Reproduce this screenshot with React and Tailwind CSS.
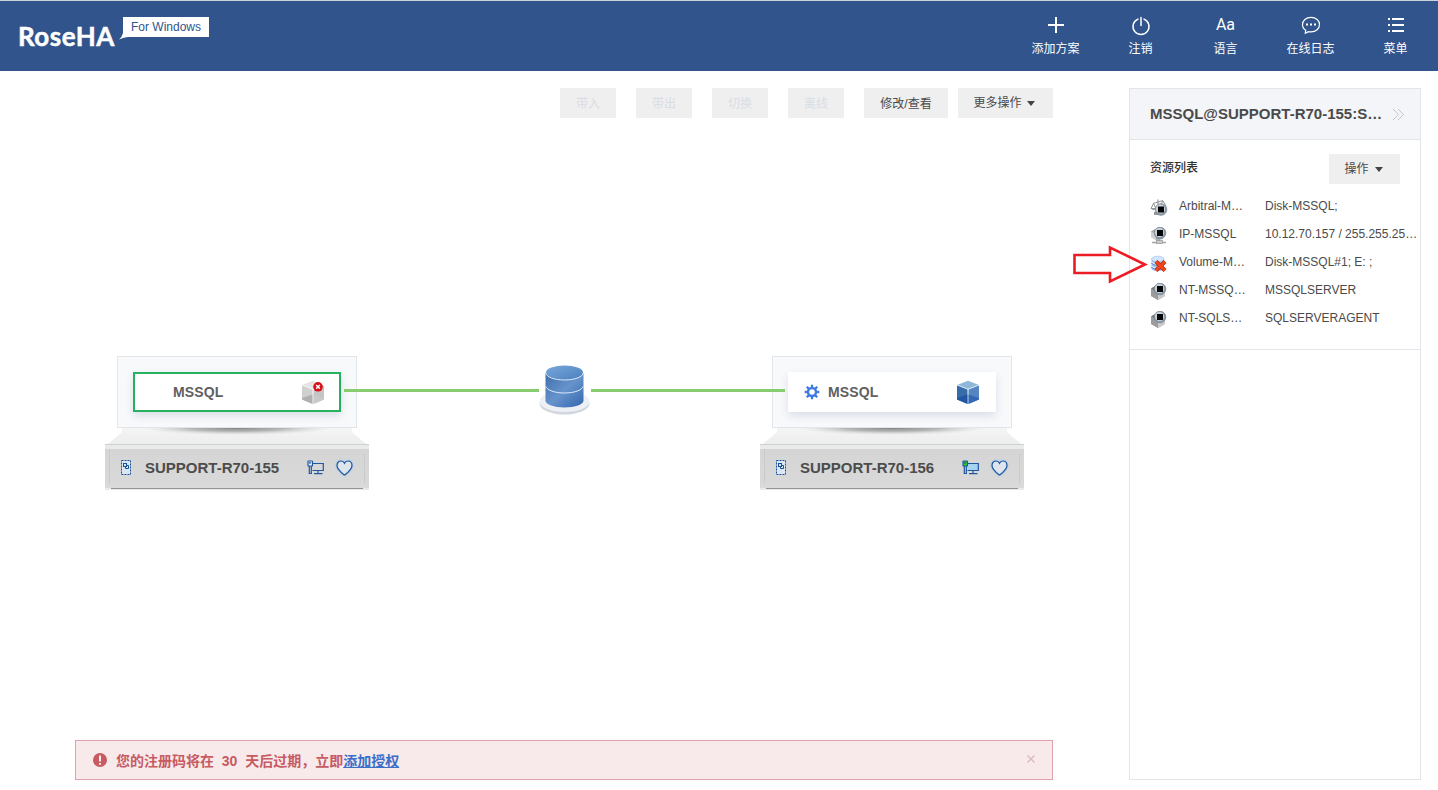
import React from "react";

const FONT = "font-['Liberation_Sans','Noto_Sans_CJK_SC',sans-serif]";

function NavItem({ label, children }) {
  return (
    <div className="flex w-[85px] flex-col items-center">
      <div className="flex h-[22px] items-center justify-center">{children}</div>
      <span className="mt-1 text-[12px] leading-[18px] whitespace-nowrap">{label}</span>
    </div>
  );
}

function Header() {
  return (
    <header className="flex h-[71px] justify-between border-t border-[#ccd1da] bg-[#30548b] text-white">
      <div className="flex pl-[18px]">
        <span className="mt-[18px] h-[34px] w-[102px] font-['Lato',sans-serif] text-[26px] leading-[34px] font-bold tracking-[0.5px] [-webkit-text-stroke:0.5px_#fff]">RoseHA</span>
        <div className="relative mt-[16px] ml-[3px] h-5 w-[86px] bg-white text-center text-[12px] leading-[20px] text-[#30548b]">
          For Windows
          <svg className="absolute top-[14px] -left-[4px]" width="9" height="9" viewBox="0 0 9 9"><path d="M4 2 9 6 Q5 6.4 0 8.6 Q3 6 4 2Z" fill="#fff" /></svg>
        </div>
      </div>
      <nav className="flex pt-[13px]">
        <NavItem label="添加方案">
          <svg width="18" height="18" viewBox="0 0 18 18" stroke="#fff" strokeWidth="2"><path d="M9 1v16M1 9h16" /></svg>
        </NavItem>
        <NavItem label="注销">
          <svg className="mt-px" width="20" height="20" viewBox="0 0 20 20" fill="none" stroke="#fff" strokeWidth="1.5" strokeLinecap="round"><path d="M7 3.100a8 8 0 1 0 6 0M10 1.500v8" /></svg>
        </NavItem>
        <NavItem label="语言">
          <span className="font-['Roboto',sans-serif] text-[16px] leading-5">Aa</span>
        </NavItem>
        <NavItem label="在线日志">
          <svg width="20" height="20" viewBox="0 0 20 20" fill="none" stroke="#fff" strokeWidth="1.2"><path d="M4.700 15.200C2.500 14 1.500 12 1.500 9.600 1.500 5.500 5 2.400 10 2.400s8.500 3.100 8.500 7.200-3.500 7.300-8.500 7.300q-1.300 0-2.500-.3L4.300 18.300z" /><path d="M5 9.600h2M9 9.600h2M13 9.600h2" strokeWidth="2" /></svg>
        </NavItem>
        <NavItem label="菜单">
          <svg width="18" height="18" viewBox="0 0 18 18" fill="#fff"><path d="M1 2h2v2H1zM5 2h12v2H5zM1 8h2v2H1zM5 8h12v2H5zM1 14h2v2H1zM5 14h12v2H5z" /></svg>
        </NavItem>
      </nav>
    </header>
  );
}

function Caret() {
  return <svg width="8" height="5" viewBox="0 0 8 5"><path d="M0 0h8L4 5z" fill="#444" /></svg>;
}

function Toolbar() {
  return (
    <div className="flex h-[30px] justify-end text-[12px] leading-[32px] text-[#4a4a4a]">
      {["带入", "带出", "切换", "离线"].map((t) => (
        <button key={t} className="mr-5 h-[30px] w-[56px] bg-[#efefef] text-[#d9dde4]">{t}</button>
      ))}
      <button className="mr-[10px] h-[30px] w-[84px] bg-[#efefef]">修改/查看</button>
      <button className="flex h-[30px] w-[95px] items-center justify-center gap-[5px] bg-[#efefef] pr-[3px]"><span>更多操作</span><Caret /></button>
    </div>
  );
}

function Cube({ offline }) {
  const c = offline
    ? ["#e4e4e4", "#d0d0d0", "#c4c4c4", "#b0b0b0", "#c9c9c9"]
    : ["#8fb8d8", "#376ca9", "#5686c1", "#2356a2", "#3468b4"];
  return (
    <svg width="24" height="25" viewBox="0 0 24 25">
      <path d="M12 .8 23 5 12 9.200 1 5z" fill={c[0]} />
      <path d="M1 5.300 11.700 9.500V24L1 19.500z" fill={c[1]} />
      <path d="M12.300 9.500 23 5.300V19.500L12.300 24z" fill={c[2]} />
      <path d="M1 18 11.700 14.500V24L1 19.500z" fill={c[3]} />
      <path d="M12.300 14.500 23 18V19.500L12.300 24z" fill={c[4]} />
      <path d="M1 5 12 9.200 23 5M12 9.200V24" fill="none" stroke="#fff" strokeOpacity=".75" strokeWidth=".7" />
      {offline && (
        <>
          <circle cx="17" cy="6.800" r="4.800" fill="#db0d16" />
          <path d="m15.200 5 3.600 3.600m0-3.600-3.600 3.600" stroke="#fff" strokeWidth="1.500" />
        </>
      )}
    </svg>
  );
}

function Gear() {
  return (
    <svg width="16" height="16" viewBox="0 0 16 16" fill="none" stroke="#3f7be0">
      <circle cx="8" cy="8" r="4" strokeWidth="2.400" />
      <path d="M8 .7v3M8 12.300v3M.7 8h3M12.300 8h3M2.800 2.800l2.100 2.100M11.100 11.100l2.100 2.100M13.200 2.800l-2.100 2.100M4.900 11.100l-2.100 2.100" strokeWidth="2.300" />
    </svg>
  );
}

function HostIcon() {
  return (
    <svg width="12" height="17" viewBox="0 0 12 17" fill="none" stroke="#14509c">
      <rect x="1.500" y="1.500" width="9" height="14" fill="#dbe6f2" strokeDasharray="2 1" />
      <rect x="3.500" y="4.500" width="3" height="3" />
      <path d="M6.500 6.500h2v3h-3v-2" />
    </svg>
  );
}

function LinkIcon({ active }) {
  return (
    <svg width="17" height="16" viewBox="0 0 17 16" fill="none" stroke="#1f57a0" strokeWidth="1.200">
      <path d="M6 3.500h10.300v7H5.500" fill={active ? "#a5d3f0" : "none"} />
      <path d="M11 10.500v3M7 13.700h8.500" />
      <rect x="1" y="1" width="4.500" height="5" rx=".6" fill={active ? "#2ed12e" : "#e8eff7"} />
      <path d="M2 2.800h2M2.300 6v7.500h2V6" />
    </svg>
  );
}

function Heart() {
  return (
    <svg className="drop-shadow-[0_0_1px_#8fc0f0]" width="17" height="16" viewBox="0 0 17 16" fill="#dee5ed" stroke="#1f57a0" strokeWidth="1.200">
      <path d="M8.500 15C5 12.300 1 9.400 1 5.400 1 2.900 2.800 1 5 1c1.600 0 2.900.9 3.500 2.300C9.100 1.900 10.400 1 12 1c2.200 0 4 1.900 4 4.400 0 4-4 6.900-7.500 9.600z" />
    </svg>
  );
}

function Server({ name, selected, running, offline }) {
  return (
    <div className="flex w-[264px] flex-col items-center">
      <div className="h-[72px] w-[240px] border border-[#e2e5e9] bg-[#f8f9fb] p-[15px]">
        <div className={"flex h-10 w-[208px] items-center bg-white shadow-[0_4px_8px_rgba(40,70,110,0.14)] " + (selected ? "border-2 border-[#26b15f] pl-[14px] pr-[14px]" : "px-4")}>
          <span className="h-4 w-4">{running && <Gear />}</span>
          <span className="ml-2 flex-1 text-[14px] leading-5 font-bold tracking-[0.1px] text-[#606060]">MSSQL</span>
          <Cube offline={offline} />
        </div>
      </div>
      <svg width="264" height="62" viewBox="0 0 264 62">
        <defs>
          <linearGradient id="deck" x1="0" y1="0" x2="0" y2="1"><stop offset="0" stopColor="#f5f5f5" /><stop offset="1" stopColor="#eceded" /></linearGradient>
          <radialGradient id="shade" cx="132" cy="0" r="95" gradientUnits="userSpaceOnUse" gradientTransform="scale(1 .075)"><stop offset="0" stopColor="#777" stopOpacity=".9" /><stop offset=".5" stopColor="#909090" stopOpacity=".6" /><stop offset="1" stopColor="#ccc" stopOpacity="0" /></radialGradient>
          <linearGradient id="face" x1="0" y1="0" x2="0" y2="1"><stop offset="0" stopColor="#d5d5d5" /><stop offset="1" stopColor="#d9d9d9" /></linearGradient>
        </defs>
        <path d="M17 0H247V4L261 16H3L17 4z" fill="url(#deck)" />
        <ellipse cx="132" cy="0" rx="95" ry="7.500" fill="url(#shade)" />
        <path d="M0 16H264V62H0z" fill="#e9eaea" />
        <path d="M0 16.500H264" stroke="#cfd0d1" />
        <path d="M0 21H264V60H0z" fill="url(#face)" />
        <path d="M4.500 21v34M259.500 26v30" stroke="#cacaca" />
        <path d="M5 55H259L264 60H0z" fill="#dadada" />
        <path d="M6 60.500H258" stroke="#929394" />
      </svg>
      <div className="relative -mt-[46px] flex h-[46px] w-full items-center pl-[15px]">
        <HostIcon />
        <span className="mt-[2px] ml-[13px] w-[162px] text-[15px] leading-5 font-bold whitespace-nowrap text-[#4c4c4c]">{name}</span>
        <span className="mt-[2px]"><LinkIcon active={running} /></span>
        <span className="mt-px ml-[12px]"><Heart /></span>
      </div>
    </div>
  );
}

function Database() {
  return (
    <svg width="52" height="52" viewBox="0 0 52 52">
      <defs>
        <linearGradient id="drum" x1="0" y1="0" x2="1" y2="1"><stop offset="0" stopColor="#3c6eab" /><stop offset=".5" stopColor="#6893cd" /><stop offset="1" stopColor="#3166ab" /></linearGradient>
        <linearGradient id="lid" x1="0" y1="0" x2="1" y2="1"><stop offset="0" stopColor="#79a7da" /><stop offset="1" stopColor="#4b80bf" /></linearGradient>
      </defs>
      <ellipse cx="25.500" cy="39.500" rx="25" ry="11" fill="#d1d6df" />
      <ellipse cx="25.500" cy="37.500" rx="25" ry="10.500" fill="#edf0f4" />
      <path d="M6.500 9v27.500c0 3.900 8.500 7 19 7s19-3.100 19-7V9z" fill="url(#drum)" />
      <ellipse cx="25.500" cy="8.500" rx="18.500" ry="7" fill="url(#lid)" />
      <path d="M7 9c0 3.900 8.300 7 18.500 7S44 12.900 44 9M7 22.500c1 3.700 8.800 6.500 18.500 6.500S43 26.200 44 22.500" fill="none" stroke="#dcebfa" />
    </svg>
  );
}

function StatusBall({ x = 10, y = 7 }) {
  return (
    <>
      <circle cx={x} cy={y} r="5.800" fill="#8d9aa8" stroke="#7a8794" strokeWidth=".8" />
      <circle cx={x - 0.500} cy={y - 0.500} r="4.600" fill="#c9d3dd" />
      <rect x={x - 3} y={y - 3} width="6" height="6" fill="#050505" />
    </>
  );
}

function ResourceIcon({ type }) {
  return (
    <svg width="18" height="18" viewBox="0 0 18 18">
      {type === "scale" && (
        <>
          <path d="M3 4.500 13 1.500M8 .5v11M3.500 4.500 1 9.500h5zM13 2l-2.500 4M13 2 16 7M4 15h9" fill="none" stroke="#858585" strokeWidth=".9" />
          <path d="M1 9.500h5q-2.500 3-5 0M4 13h8v3H4z" fill="#999" />
          <StatusBall x={11} y={10.500} />
        </>
      )}
      {type === "ip" && (
        <>
          <path d="M1 4.500 5 2l8 1v9l-7 1-5-3z" fill="#a5a5a5" />
          <path d="m1 5 5 1v6.500L1 10z" fill="#d0d0d0" />
          <path d="M2 15.500h14M9 12v3" stroke="#a5a5a5" strokeWidth="1.500" />
          <rect x="6.500" y="13.500" width="6" height="3" fill="#ccc" stroke="#888" strokeWidth=".6" />
          <StatusBall x={10} y={6} />
        </>
      )}
      {type === "volume" && (
        <>
          <path d="M1.500 4v9.500c0 3.500 12.500 3.500 12.500 0V4z" fill="#a4c4f2" />
          <ellipse cx="7.800" cy="4" rx="6.300" ry="2.800" fill="#d4e4fc" stroke="#8fb2e6" strokeWidth=".5" />
          <path d="M1.500 8c1 3 11.500 3 12.500 0M1.500 12c1 3 11.500 3 12.500 0" fill="none" stroke="#5583c3" />
          <path d="M2 7.200c1 2.500 10.500 2.500 11.500 0M2 11.200c1 2.500 10.500 2.500 11.500 0" fill="none" stroke="#fff" strokeWidth=".8" />
          <path d="m6 6.500 9 9m0-9-9 9" stroke="#b72a10" strokeWidth="4" />
          <path d="m6 6.500 9 9m0-9-9 9" stroke="#f3451c" strokeWidth="2.600" />
        </>
      )}
      {type === "nt" && (
        <>
          <path d="M1 5.500 7 2l8 4v7l-7 4-7-4z" fill="#b5b5b5" />
          <path d="m1 6 7 4v7l-7-4z" fill="#9c9c9c" />
          <path d="m8 10 7-4v7l-7 4z" fill="#cacaca" />
          <path d="m1 5.500 5-3 3 4-1 3.500z" fill="#777" />
          <StatusBall x={10} y={6} />
        </>
      )}
    </svg>
  );
}

const RESOURCES = [
  ["scale", "Arbitral-M…", "Disk-MSSQL;"],
  ["ip", "IP-MSSQL", "10.12.70.157 / 255.255.25…"],
  ["volume", "Volume-M…", "Disk-MSSQL#1; E: ;"],
  ["nt", "NT-MSSQ…", "MSSQLSERVER"],
  ["nt", "NT-SQLS…", "SQLSERVERAGENT"],
];

function SidePanel() {
  return (
    <aside className="h-[692px] w-[292px] border border-[#e4e5eb] text-[#4a4a4a]">
      <div className="flex h-[51px] items-center border-b border-[#e4e5eb] bg-[#f4f5f8] pl-5">
        <span className="w-[242px] shrink-0 text-[15px] leading-5 font-bold whitespace-nowrap">MSSQL@SUPPORT-R70-155:S…</span>
        <svg width="13" height="13" viewBox="0 0 13 13" fill="none" stroke="#c3c5c9"><path d="m1 1 5.500 5.500L1 12M6 1l5.500 5.500L6 12" /></svg>
      </div>
      <div className="h-[210px] border-b border-[#e4e5eb]">
        <div className="flex h-[52px] justify-between pt-[14px] pr-5 pl-5 text-[12px]">
          <span className="leading-[29px] font-medium text-[#333]">资源列表</span>
          <button className="flex h-[30px] w-[71px] items-center justify-center gap-[6px] bg-[#efefef] pr-[2px]"><span>操作</span><Caret /></button>
        </div>
        {RESOURCES.map(([type, name, value]) => (
          <div key={name} className="flex h-7 items-center pl-5 text-[12px] whitespace-nowrap">
            <span className="mt-[3px] shrink-0"><ResourceIcon type={type} /></span>
            <span className="ml-[11px] w-[86px] shrink-0">{name}</span>
            <span>{value}</span>
          </div>
        ))}
      </div>
    </aside>
  );
}

export default function App() {
  return (
    <div className={"relative h-[790px] w-[1438px] overflow-hidden bg-white " + FONT}>
      <Header />
      <main className="flex justify-between pt-[17px] pr-[17px] pl-[75px]">
        <section className="flex h-[692px] w-[978px] flex-col">
          <Toolbar />
          <div className="relative mt-[238px] ml-[30px] flex h-[134px] w-[919px] justify-between">
            <Server name="SUPPORT-R70-155" selected offline />
            <div className="mt-[8px]"><Database /></div>
            <Server name="SUPPORT-R70-156" running />
            <div className="absolute top-[33px] left-[239px] h-[3px] w-[195px] bg-[#88cc70]" />
            <div className="absolute top-[33px] left-[486px] h-[3px] w-[194px] bg-[#88cc70]" />
          </div>
          <div className="mt-auto flex h-10 items-center border border-[#dda2aa] bg-[#f8e9eb] pl-[17px] text-[14px] text-[#c65b62]">
            <svg width="14" height="14" viewBox="0 0 14 14"><circle cx="7" cy="7" r="7" fill="#c65b62" /><path d="M7 2.500v6M7 10v1.800" stroke="#f8e9eb" strokeWidth="2" /></svg>
            <span className="mt-[2px] ml-[9px] flex-1 font-bold whitespace-pre">您的注册码将在  30  天后过期，立即<a className="text-[#3b6fc9] underline">添加授权</a></span>
            <svg className="mr-[17px] -mt-[3px]" width="8" height="8" viewBox="0 0 8 8" stroke="#d5b9bd" strokeWidth="1.200"><path d="m.5.5 7 7m0-7-7 7" /></svg>
          </div>
        </section>
        <SidePanel />
      </main>
      <svg className="absolute top-[245px] left-[1072px]" width="76" height="39" viewBox="0 0 76 39" fill="none" stroke="#ed1c24" strokeWidth="2.600"><path d="M2.500 10H38V2.500L73 19.500 38 36.500V28H2.500z" /></svg>
    </div>
  );
}
